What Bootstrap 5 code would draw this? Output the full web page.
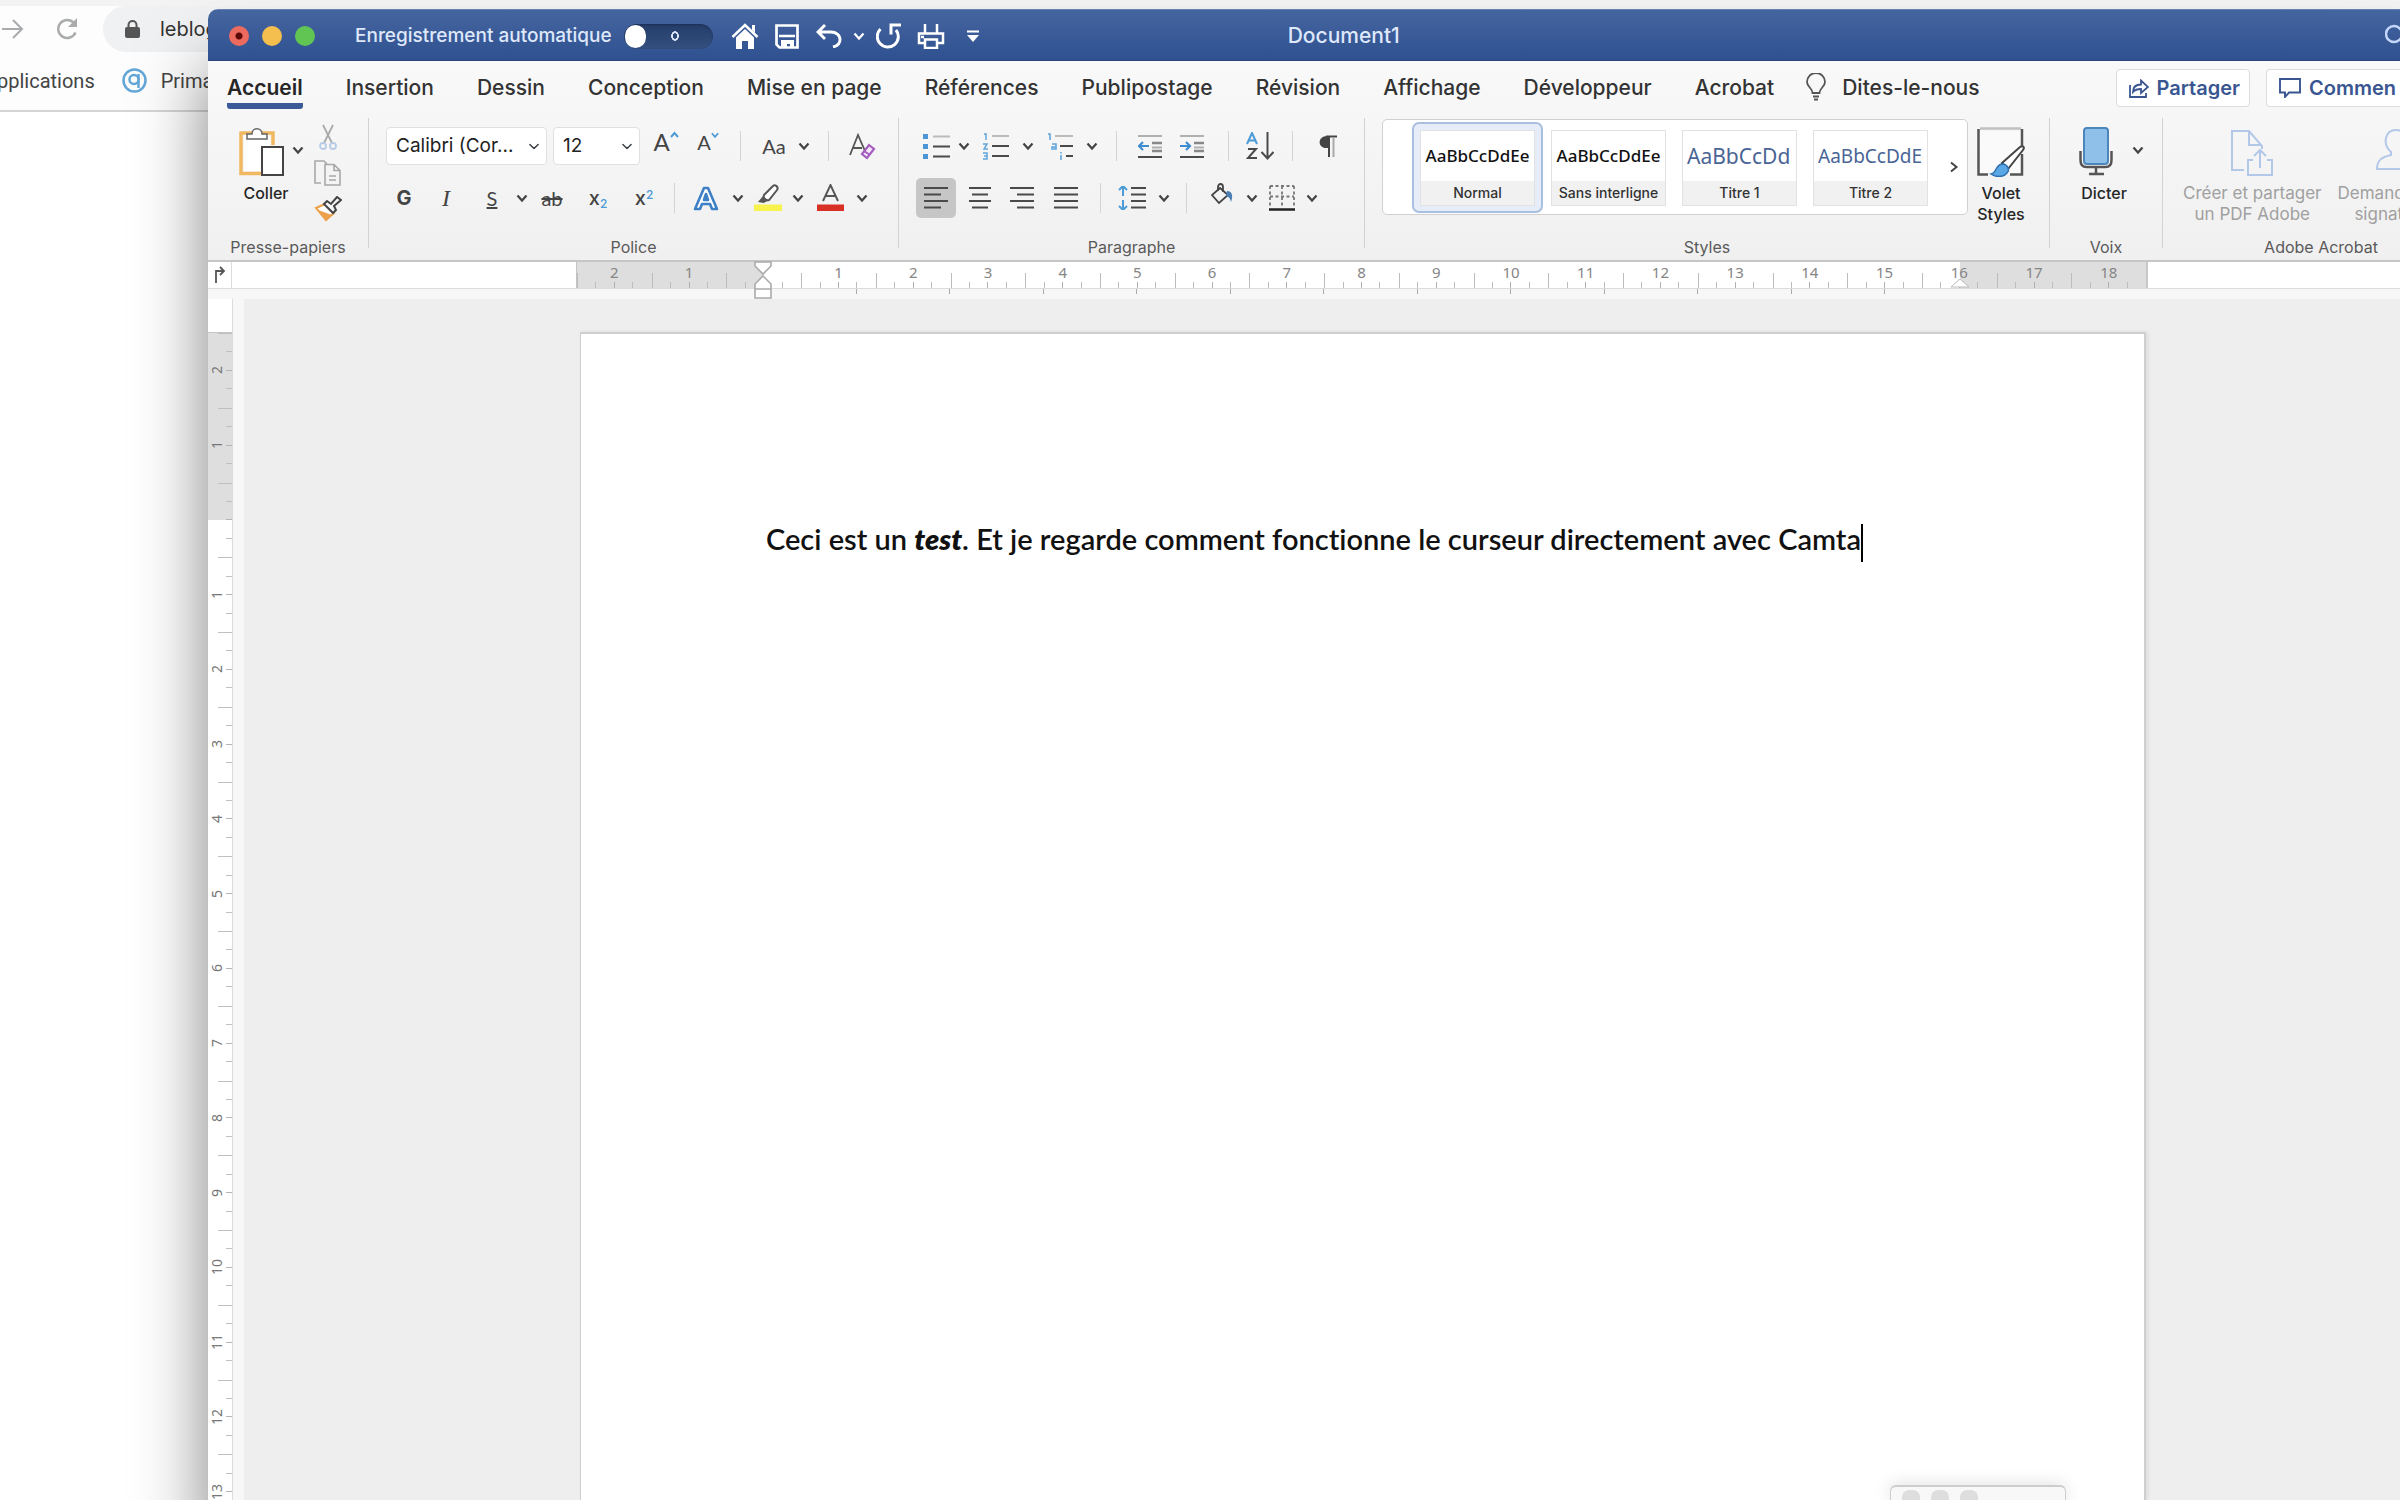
<!DOCTYPE html>
<html lang="fr">
<head>
<meta charset="utf-8">
<meta name="viewport" content="width=device-width, initial-scale=1">
<title>Document1</title>
<link href="https://cdn.jsdelivr.net/npm/bootstrap@5.3.0/dist/css/bootstrap.min.css" rel="stylesheet">
<script src="https://cdn.jsdelivr.net/npm/bootstrap@5.3.0/dist/js/bootstrap.bundle.min.js"></script>
<style>
  body { font-family: Inter, "Liberation Sans", sans-serif; color: #2b2b2b; background: #fff; height: 100vh; overflow: hidden; }
  svg { display: block; flex: none; fill: none; stroke-linecap: butt; }
  button { font-family: inherit; }

  /* browser behind */
  .web { height: 112px; background: #fdfdfd; border-bottom: 2px solid #d4d5d6; z-index: -1; border-top: 6px solid #f3f3f3; }
  .reload { margin: 0 7px 0 31px; }
  .omni { height: 46px; border-radius: 23px 0 0 23px; background: #f0f1f2; margin-left: 17px; padding-left: 22px; font-size: 20px; color: #333; }
  .bookmark { font-family: Roboto, sans-serif; font-size: 20px; line-height: 24px; color: #444; text-decoration: none; }
  .marks { margin-top: 16px; margin-left: -3px; }
  .site { margin: 0 14px 0 27px; }

  /* editor window */
  .win { top: 9px; left: 208px; right: 0; bottom: 0; border-radius: 10px 0 0 0; background: #eee; box-shadow: 0 60px 70px rgba(0,0,0,.5); }
  .clip { border-radius: 10px 0 0 0; }
  .titlebar { height: 52px; background: linear-gradient(#45659f, #2f5190); border-top: 1px solid #6680b3; border-bottom: 1px solid #27457f; color: #dfe8fb; padding: 2px 0 0 21px; }
  .light { width: 20px; height: 20px; border-radius: 50%; margin-right: 13px; }
  .l-close { background: radial-gradient(circle, #5c0a06 0 3px, #ec6a5e 4px); }
  .l-min { background: #f5bf4f; } .l-max { background: #61c554; }
  .auto-lb { font-size: 19px; font-weight: 500; margin-left: 27px; line-height: 24px; white-space: nowrap; }
  .auto-sw { appearance: none; width: 89px; height: 25px; border-radius: 13px; margin: 0 16px 0 12px;
    background: radial-gradient(ellipse 4px 5px at 51px 12px, transparent 50%, #dfe8fb 60% 90%, transparent) , linear-gradient(#253c68, #34507f); box-shadow: inset 0 1px 2px #1c3058; }
  .auto-sw::before { content: ""; display: block; width: 21px; height: 23px; border-radius: 12px; background: #fff; margin: 1px; }
  .qa { background: none; border: 0; padding: 0; height: 32px; display: flex; align-items: center; justify-content: center; color: #fff; }
  .doc-name { font-size: 21px; line-height: 26px; font-weight: 500; margin-left: 299px; }

  .ribbon { background: linear-gradient(#f9f9f9, #f0f0f0); border-bottom: 2px solid #c6c6c6; height: 201px; }
  .tabs { height: 50px; padding-left: 19px; }
  .tabs a { font-size: 21px; line-height: 30px; font-weight: 500; color: #333; text-decoration: none; margin-right: 43px; padding-top: 12px; height: 48px; white-space: nowrap; }
  .tabs a.on { font-weight: 600; color: #262626; border-bottom: 6px solid #3a5a98; border-radius: 3px; }
  .act { height: 38px; background: #fff; border: 1px solid #dcdcdc; border-radius: 4px; color: #3a5691; font-weight: 600; font-size: 20px; line-height: 24px; padding: 0 9px 0 12px; gap: 8px; white-space: nowrap; }
  .grp { height: 149px; padding-top: 16px; flex: none; }
  .bar { width: 1px; height: 130px; margin-top: 7px; background: #d2d2d2; flex: none; }
  .cap { font-size: 16px; line-height: 24px; color: #5a5a5a; text-align: center; margin-top: 17px; }
  .r1 { height: 38px; } .r2 { height: 40px; margin-top: 13px; }
  .tb { height: 38px; border: 0; background: none; padding: 0; display: flex; align-items: center; justify-content: center; color: #444; flex: none; font-size: 24px; line-height: 30px; }
  .tb.on { background: #c6c6c6; border-radius: 5px; height: 40px; }
  .sp { height: 30px; display: flex; justify-content: center; flex: none; }
  .sp::after { content: ""; width: 1px; background: #d4d4d4; }
  .s16 { width: 16px; } .s24 { width: 24px; } .s28 { width: 28px; } .s32 { width: 32px; } .s36 { width: 36px; }
  .s40 { width: 40px; } .s44 { width: 44px; } .s48 { width: 48px; } .s52 { width: 52px; }
  .fs-box.form-select { height: 38px; border: 1px solid #e0e0e0; border-radius: 4px; padding: 0 26px 0 9px; font-size: 19px; line-height: 24px; color: #222; background-size: 12px 11px; background-position: right 6px center; background-color: #fff; }
  .sel-a { width: 161px; } .sel-b { width: 87px; margin-left: 6px; }
  .lite { font-family: Lato, sans-serif; font-weight: 400; }
  .big { border: 0; background: none; padding: 0; font-size: 16px; line-height: 21px; color: #262626; font-weight: 500; display: flex; flex-direction: column; align-items: center; gap: 6px; white-space: nowrap; }
  .big.off { color: #a0a0a0; font-weight: 400; font-size: 17px; }
  .gallery { height: 96px; width: 586px; background: #fff; border: 1px solid #d0d0d0; border-radius: 5px; margin-top: -8px; padding-left: 29px; }
  .tile { width: 131px; height: 91px; border: 2px solid transparent; border-radius: 7px; background: none; padding: 6px; }
  .tile.on { border-color: #a9bfdf; background: #e6ecf8; }
  .tile > span { display: flex; flex-direction: column; height: 76px; width: 115px; border: 1px solid #e2e2e2; background: #fff; overflow: hidden; }
  .tile b { font: 500 17px/50px "Noto Sans", sans-serif; height: 50px; overflow: hidden; color: #111; white-space: nowrap; margin: 0 4px; }
  .tile b.h1s { font-size: 21px; font-weight: 400; color: #4a6595; text-align: left; }
  .tile b.h2s { font-size: 19px; font-weight: 400; color: #4a6595; text-align: left; }
  .tile i { font: 500 14px/24px Inter, sans-serif; background: #f1f1f1; color: #333; flex: 1; white-space: nowrap; }
  .g1 { width: 160px; } .g1 .big { margin-left: 30px; width: 56px; } .chev1 { margin: 4px 0 0 -4px; }
  .side { margin-left: 8px; height: 93px; margin-top: -8px; } .side .tb { height: 36px; width: 28px; }
  .g2 { width: 529px; padding-left: 17px; } .g3 { width: 465px; padding-left: 17px; }
  .g4 { width: 684px; padding-left: 17px; } .g5 { width: 112px; } .g6 { width: 316px; }
  .pane-row { height: 91px; }
  .g2 .cap, .g3 .cap, .g4 .cap { margin-left: -17px; }
  .pane { width: 66px; } .mic { padding-left: 28px; } .mic .big { width: 52px; } .adobe { padding-left: 20px; }
  .gras { font-size: 20px; } .ital { font-family: "Liberation Serif", serif; font-style: italic; }
  .idx { font-size: 20px; font-weight: 500; } .idx sub, .idx sup { font-size: 12px; color: #4c9bd6; }

  /* rulers */
  .hr-row { height: 27px; background: #fff; border-bottom: 1px solid #dcdcdc; }
  .corner { width: 24px; border-right: 1px solid #dcdcdc; }
  .hr-lead { width: 344px; }
  .hruler { width: 1572px; background: linear-gradient(90deg, #dedede 187px, transparent 187px 1383px, #dedede 1383px); border-left: 1px solid #c4c4c4; border-right: 2px solid #c8c8c8; }
  .hcell { flex: 1 1 0; font: 15px/20px "Noto Sans", sans-serif; color: #858585; text-align: center;
    background: linear-gradient(#bcbcbc,#bcbcbc) 0 100%/1px 15px no-repeat, linear-gradient(#bcbcbc,#bcbcbc) 25% 100%/1px 6px no-repeat, linear-gradient(#b0b0b0,#b0b0b0) 50% 100%/1px 6px no-repeat, linear-gradient(#bcbcbc,#bcbcbc) 75% 100%/1px 6px no-repeat; }
  .stops { height: 10px; background: #f7f7f7; padding-left: 555px; }
  .stops > div { width: 1122px; height: 5px; }
  .stops span { flex: 1 1 0; border-right: 1px solid #aaa; }
  .mark-l { left: 545px; top: 252px; } .mark-r { left: 1742px; top: 270px; }
  .vr-col { width: 25px; background: #fff; border-right: 1px solid #dcdcdc; padding-top: 43px; margin-top: -10px; }
  .vruler { height: 1197px; background: linear-gradient(#dedede 187px, #fff 187px); border-top: 1px solid #c4c4c4; }
  .vcell { flex: 1 1 0; display: flex; align-items: center; padding-left: 1px;
    background: linear-gradient(#c0c0c0,#c0c0c0) 100% 0/14px 1px no-repeat, linear-gradient(#c0c0c0,#c0c0c0) 100% 25%/6px 1px no-repeat, linear-gradient(#b4b4b4,#b4b4b4) 100% 50%/6px 1px no-repeat, linear-gradient(#c0c0c0,#c0c0c0) 100% 75%/6px 1px no-repeat; }
  .vcell span { writing-mode: vertical-rl; transform: rotate(180deg); font: 14px/16px "Noto Sans", sans-serif; color: #777; }
  .gutter { width: 11px; background: #f7f7f7; }
  .sheet { width: 1566px; margin: 33px 0 0 336px; background: #fff; border: solid #cfcfcf; border-width: 2px 2px 0 1px; padding: 185px 0 0 185px; box-shadow: 2px 0 4px rgba(0,0,0,.08); }
  .sheet p { font-family: Lato, "Noto Sans", sans-serif; font-weight: 600; font-size: 29px; line-height: 40px; color: #111; white-space: nowrap; font-variant-ligatures: none; }
  .sheet strong { font-weight: 800; }
  .caret { display: inline-block; width: 2px; height: 38px; background: #000; vertical-align: middle; }
  .float-bar { left: 1682px; bottom: 0; width: 176px; height: 15px; background: #f8f8f8; border: 1px solid #cdcdcd; border-top-width: 2px; border-bottom: 0; border-radius: 6px 6px 0 0; padding: 3px 0 0 11px; gap: 11px; box-shadow: 0 0 18px rgba(0,0,0,.14); }
  .float-bar span { width: 18px; height: 18px; flex: none; border-radius: 7px; background: #dedede; }
</style>
</head>
<body class="position-relative">

<svg width="0" height="0" class="position-absolute" aria-hidden="true">
  <symbol id="chev" viewBox="0 0 12 12"><path d="M1.500 3.500 6 8.500l4.500-5" stroke="currentColor" stroke-width="2.200"/></symbol>
  <symbol id="lines-l" viewBox="0 0 24 24"><path d="M0 2h24M0 8.500h17M0 15h24M0 21.500h17" stroke="#4a4a4a" stroke-width="2"/></symbol>
  <symbol id="lines-c" viewBox="0 0 24 24"><path d="M1 2h22M4 8.500h16M1 15h22M4 21.500h16" stroke="#4a4a4a" stroke-width="2"/></symbol>
  <symbol id="lines-r" viewBox="0 0 24 24"><path d="M0 2h24M7 8.500h17M0 15h24M7 21.500h17" stroke="#4a4a4a" stroke-width="2"/></symbol>
  <symbol id="lines-j" viewBox="0 0 24 24"><path d="M0 2h24M0 8.500h24M0 15h24M0 21.500h24" stroke="#4a4a4a" stroke-width="2"/></symbol>
</svg>

<header class="web position-absolute top-0 start-0 w-100 d-flex flex-column">
  <div class="d-flex align-items-center">
    <svg width="24" height="22" viewBox="0 0 24 22" stroke="#a9abad" stroke-width="2"><path d="M2 11h20M13 2l9 9-9 9"/></svg>
    <svg class="reload" width="24" height="22" viewBox="0 0 24 22" stroke="#a9abad" stroke-width="2.500"><path d="M20.500 14.500A9 9 0 1 1 19 5"/><path d="M22 0v9h-9z" fill="#a9abad" stroke="none"/></svg>
    <div class="omni d-flex align-items-center flex-fill">
      <svg class="me-3" width="15" height="18" viewBox="0 0 15 18"><path d="M3.500 8V5a4 4 0 0 1 8 0v3" stroke="#555" stroke-width="2"/><rect y="7" width="15" height="11" rx="2" fill="#555"/></svg>
      <span class="ms-1">leblogducurseur</span>
    </div>
  </div>
  <nav class="marks d-flex align-items-center">
    <a class="bookmark" href="#">pplications</a>
    <svg class="site" width="25" height="25" viewBox="0 0 25 25" stroke="#62a7d8"><circle cx="12.500" cy="12.500" r="11" stroke-width="2.500"/><circle cx="12" cy="11.500" r="4.500" stroke-width="2.500"/><path d="M16.500 6v14" stroke-width="2.500"/></svg>
    <a class="bookmark" href="#">Primaire</a>
  </nav>
</header>

<main class="win position-absolute">
 <div class="clip d-flex flex-column h-100 overflow-hidden position-relative">

  <div class="titlebar d-flex align-items-center flex-shrink-0">
    <span class="light l-close"></span><span class="light l-min"></span><span class="light l-max"></span>
    <label class="auto-lb" for="auto">Enregistrement automatique</label>
    <input class="auto-sw flex-shrink-0" id="auto" type="checkbox" role="switch">
    <button class="qa s32" aria-label="Accueil"><svg width="28" height="26" viewBox="0 0 28 26"><path d="M1.500 14 14 2l12.500 12" stroke="#fff" stroke-width="2.500"/><path d="M21 2h3v8l-3-3zM5 14.500l9-8.500 9 8.500V26h-6v-8h-6v8H5z" fill="#fff"/></svg></button>
    <button class="qa s52" aria-label="Enregistrer"><svg width="24" height="25" viewBox="0 0 24 25"><path d="M1.500 1.500h21v22h-18l-3-3z" stroke="#fff" stroke-width="2.700"/><path d="M4 12h16" stroke="#fff" stroke-width="2.500"/><path d="M6 16h13v8h-4v-4h-3v4H6z" fill="#fff"/></svg></button>
    <button class="qa s32" aria-label="Annuler"><svg width="26" height="24" viewBox="0 0 26 24"><path d="M9 1 2 8l7 7M2.500 8H15c5 0 9 3 9 7.500S21 22 17 23" stroke="#fff" stroke-width="2.900"/></svg></button>
    <button class="qa s28" aria-label="Options d’annulation"><svg width="12" height="12"><use href="#chev"/></svg></button>
    <button class="qa s32" aria-label="Rétablir"><svg width="26" height="26" viewBox="0 0 26 26"><path d="M4.500 6A10.500 10.500 0 1 0 20 7" stroke="#fff" stroke-width="3"/><path d="M25 2H15v9.500" stroke="#fff" stroke-width="3"/></svg></button>
    <button class="qa s52" aria-label="Imprimer"><svg width="28" height="26" viewBox="0 0 28 26" stroke="#fff" stroke-width="2.500"><path d="M8 10V1M20 10V1M7 20H2v-9.500h24V20h-5M8 16.500h12V25H8zM4 14h3"/></svg></button>
    <button class="qa s32" aria-label="Personnaliser"><svg width="12" height="12" viewBox="0 0 12 12"><path d="M0 1.500h12" stroke="#fff" stroke-width="2"/><path d="M0 5h12l-6 7z" fill="#fff"/></svg></button>
    <span class="doc-name">Document1</span>
    <button class="qa ms-auto" aria-label="Rechercher"><svg width="15" height="24" viewBox="0 0 15 24"><circle cx="9" cy="10" r="8" stroke="#c3d6f8" stroke-width="2.500"/></svg></button>
  </div>

  <div class="ribbon flex-shrink-0">
    <div class="tabs d-flex">
      <a class="on" href="#">Accueil</a><a href="#">Insertion</a><a href="#">Dessin</a><a href="#">Conception</a><a href="#">Mise en page</a><a href="#">Références</a><a href="#">Publipostage</a><a href="#">Révision</a><a href="#">Affichage</a><a href="#">Développeur</a><a href="#" class="me-4">Acrobat</a>
      <a href="#" class="d-flex ms-2"><svg class="me-3" width="20" height="28" viewBox="0 0 20 28" stroke="#555" stroke-width="1.800"><path d="M6.500 20c0-5-5.500-6-5.500-11a9 9 0 0 1 18 0c0 5-5.500 6-5.500 11zM7 23.500h6M8 26.500h4"/></svg>Dites-le-nous</a>
      <div class="d-flex ms-auto pt-2 gap-3 flex-shrink-0">
        <button class="act d-flex align-items-center"><svg width="20" height="19" viewBox="0 0 20 19" stroke="#3a5691" stroke-width="1.800"><path d="M1 6v12h16v-4M4 13c0-5 3-7.500 8-7.500V1.500L19 8l-7 6v-4c-4 0-6 .5-8 3z"/></svg>Partager</button>
        <button class="act d-flex align-items-center border-end-0 rounded-end-0 pe-1"><svg width="22" height="20" viewBox="0 0 22 20" stroke="#3a5691" stroke-width="1.900"><path d="M1 1h20v13.500H10L6 19v-4.500H1z"/></svg>Commen</button>
      </div>
    </div>

    <div class="d-flex overflow-hidden">
      <section class="grp g1">
        <div class="pane-row d-flex align-items-start">
          <button class="big"><svg class="me-2" width="46" height="50" viewBox="0 0 46 50"><path d="M2 6h32v12M2 4.500v42h20" stroke="#f0b860" stroke-width="3.500"/><path d="M5 8h26v12H22v24H5z" fill="#fff"/><path d="M8 12V7h5c0-7 10-7 10 0h5v5z" fill="#fff" stroke="#666" stroke-width="1.500"/><rect x="23" y="20" width="21" height="28" fill="#fff" stroke="#444" stroke-width="2"/></svg>Coller</button>
          <button class="tb s16 chev1" aria-label="Options de collage"><svg width="12" height="12"><use href="#chev"/></svg></button>
          <div class="d-flex flex-column side">
            <button class="tb" aria-label="Couper"><svg width="18" height="26" viewBox="0 0 18 26"><path d="M4 1l9 18M14 1 5 19" stroke="#aaa" stroke-width="1.800"/><circle cx="4" cy="22" r="3" stroke="#b9cce6" stroke-width="1.800"/><circle cx="14" cy="22" r="3" stroke="#b9cce6" stroke-width="1.800"/></svg></button>
            <button class="tb" aria-label="Copier"><svg width="28" height="26" viewBox="0 0 28 26" stroke="#a8a8a8" stroke-width="1.600"><path d="M7 23H1V1h9l3 3M11 4.500h9l6 6V25H11zM20 4.500v6h6M15 16h7M15 20h7"/></svg></button>
            <button class="tb" aria-label="Reproduire la mise en forme"><svg width="28" height="26" viewBox="0 0 28 26"><path d="M2 12 11 8l9 9-8 7z" fill="#fff" stroke="#eda04c" stroke-width="2"/><path d="M4 14l14 5-6 6z" fill="#eda04c"/><path d="M10 8l3-3 4 3 6-7 4 3-7 6 2 4-3 3z" fill="#f6f6f6" stroke="#444" stroke-width="2"/></svg></button>
          </div>
        </div>
        <div class="cap">Presse-papiers</div>
      </section>
      <div class="bar"></div>

      <section class="grp g2">
        <div class="r1 d-flex align-items-center">
          <select class="form-select fs-box sel-a" aria-label="Police"><option>Calibri (Cor...</option></select>
          <select class="form-select fs-box sel-b" aria-label="Taille"><option>12</option></select>
          <button class="tb s44 lite ms-1 align-items-start">A<svg class="mt-1" width="9" height="8" viewBox="0 0 9 8"><path d="M1 6l3.500-4L8 6" stroke="#4c9bd6" stroke-width="2"/></svg></button>
          <button class="tb s40 lite align-items-start fs-5">A<svg class="mt-1" width="8" height="8" viewBox="0 0 9 8"><path d="M1 2l3.500 4L8 2" stroke="#4c9bd6" stroke-width="2"/></svg></button>
          <span class="sp s24"></span>
          <button class="tb s44 lite fs-5">Aa</button><button class="tb s16" aria-label="Casse"><svg width="12" height="12"><use href="#chev"/></svg></button>
          <span class="sp s32"></span>
          <button class="tb s36" aria-label="Effacer la mise en forme"><svg width="27" height="27" viewBox="0 0 27 27"><path d="M1 22 9 2l7 16M4 15h9" stroke="#555" stroke-width="1.800"/><path d="M20 12l5 4-7 9-5-4z" stroke="#a35cc0" stroke-width="2.200" fill="#f6eafa"/><path d="M15 18l6 4" stroke="#a35cc0" stroke-width="2"/></svg></button>
        </div>
        <div class="r2 d-flex align-items-center">
          <button class="tb s36 fw-bold gras">G</button>
          <button class="tb s48 ital">I</button>
          <button class="tb s44 lite text-decoration-underline fs-5">S</button><button class="tb s16" aria-label="Soulignement"><svg width="12" height="12"><use href="#chev"/></svg></button>
          <button class="tb s44 lite text-decoration-line-through fs-5">ab</button>
          <button class="tb s48 idx"><span>x<sub>2</sub></span></button>
          <button class="tb s44 idx"><span>x<sup>2</sup></span></button>
          <span class="sp s16"></span>
          <button class="tb s48" aria-label="Effets de texte"><svg width="26" height="25" viewBox="0 0 26 25"><path d="M2 23 11 2h4l9 21h-5l-2-5H9l-2 5zM11 14h4l-2-6z" fill="#fff" stroke="#3d80c6" stroke-width="2.600" stroke-linejoin="round"/></svg></button><button class="tb s16" aria-label="Options d’effets"><svg width="12" height="12"><use href="#chev"/></svg></button>
          <button class="tb s44" aria-label="Surlignage"><svg width="28" height="28" viewBox="0 0 28 28"><path d="M10 11 19 2c2-2 6 1 4 4l-8 10-6 1z" fill="#fff" stroke="#555" stroke-width="2"/><path d="M4 18l5-6 5 4-4 3z" fill="#555"/><path d="M0 20.500h28v6.500H0z" fill="#f8f24e"/></svg></button><button class="tb s16" aria-label="Couleurs de surlignage"><svg width="12" height="12"><use href="#chev"/></svg></button>
          <button class="tb s48" aria-label="Couleur de police"><svg width="27" height="28" viewBox="0 0 27 28"><path d="M6 17 13.500 1 21 17M9 12h9" stroke="#555" stroke-width="1.900"/><path d="M0 20.500h27v6.500H0z" fill="#d93025"/></svg></button><button class="tb s16" aria-label="Couleurs de police"><svg width="12" height="12"><use href="#chev"/></svg></button>
        </div>
        <div class="cap">Police</div>
      </section>
      <div class="bar"></div>

      <section class="grp g3">
        <div class="r1 d-flex align-items-center">
          <button class="tb s40" aria-label="Puces"><svg width="27" height="26" viewBox="0 0 27 26"><path d="M0 1h5v5H0zM0 11h5v5H0zM0 21h5v5H0z" fill="#4c96d6"/><path d="M10 3.500h17" stroke="#bbb" stroke-width="2"/><path d="M10 13.500h17M10 23.500h17" stroke="#4a4a4a" stroke-width="2"/></svg></button><button class="tb s16" aria-label="Types de puces"><svg width="12" height="12"><use href="#chev"/></svg></button>
          <button class="tb s48" aria-label="Numérotation"><svg width="26" height="28" viewBox="0 0 26 28"><path d="M1 2h2v6M0 12h4l-3 5h4M0 21h4v6H0M1 24h3" stroke="#62a5dc" stroke-width="1.500"/><path d="M9 4h17" stroke="#bbb" stroke-width="2"/><path d="M9 14h17M9 24h17" stroke="#4a4a4a" stroke-width="2"/></svg></button><button class="tb s16" aria-label="Types de numéros"><svg width="12" height="12"><use href="#chev"/></svg></button>
          <button class="tb s48" aria-label="Liste à plusieurs niveaux"><svg width="26" height="28" viewBox="0 0 26 28"><path d="M1 2h2v6M5 12h4v5H5v-2h4M14 20v1.500M14 23v5" stroke="#62a5dc" stroke-width="1.600"/><path d="M8 4h18" stroke="#bbb" stroke-width="2"/><path d="M13 14h13M19 24h7" stroke="#4a4a4a" stroke-width="2"/></svg></button><button class="tb s16" aria-label="Types de listes"><svg width="12" height="12"><use href="#chev"/></svg></button>
          <span class="sp s32"></span>
          <button class="tb s36" aria-label="Diminuer le retrait"><svg width="24" height="26" viewBox="0 0 24 26"><path d="M0 3h24M14 14.500h10" stroke="#b0b0b0" stroke-width="2"/><path d="M0 24h24" stroke="#4a4a4a" stroke-width="2"/><path d="M14 10h10M14 18h10" stroke="#888" stroke-width="2.500"/><path d="M11 13H1M5 9l-4 4 4 4" stroke="#3f8cd0" stroke-width="2.200"/></svg></button>
          <button class="tb s48" aria-label="Augmenter le retrait"><svg width="24" height="26" viewBox="0 0 24 26"><path d="M0 3h24M14 14.500h10" stroke="#b0b0b0" stroke-width="2"/><path d="M0 24h24" stroke="#4a4a4a" stroke-width="2"/><path d="M14 10h10M14 18h10" stroke="#888" stroke-width="2.500"/><path d="M0 13h9M6 9l4 4-4 4" stroke="#3f8cd0" stroke-width="2.200"/></svg></button>
          <span class="sp s24"></span>
          <button class="tb s40" aria-label="Trier"><svg width="28" height="28" viewBox="0 0 28 28"><path d="M1 12 6 1l5 11M3 8.500h6" stroke="#4c9bd6" stroke-width="2"/><path d="M2 17h8L2 26h9" stroke="#4a4a4a" stroke-width="2"/><path d="M21.500 0v26M15.500 20l6 6.500 6-6.500" stroke="#4a4a4a" stroke-width="2"/></svg></button>
          <span class="sp s24"></span>
          <button class="tb s48" aria-label="Marques de paragraphe"><svg width="18" height="22" viewBox="0 0 18 22"><path d="M9 1v12C-2 14-2 1 8 1z" fill="#444"/><path d="M7 1.500h11M10 1v21" stroke="#444" stroke-width="2"/><path d="M14.500 2v20" stroke="#aaa" stroke-width="2"/></svg></button>
        </div>
        <div class="r2 d-flex align-items-center">
          <button class="tb s40 on" aria-label="Aligner à gauche"><svg width="24" height="24"><use href="#lines-l"/></svg></button>
          <button class="tb s48" aria-label="Centrer"><svg width="24" height="24"><use href="#lines-c"/></svg></button>
          <button class="tb s36" aria-label="Aligner à droite"><svg width="24" height="24"><use href="#lines-r"/></svg></button>
          <button class="tb s52" aria-label="Justifier"><svg width="24" height="24"><use href="#lines-j"/></svg></button>
          <span class="sp s16"></span>
          <button class="tb s48" aria-label="Interligne"><svg width="28" height="24" viewBox="0 0 28 24"><path d="M5 0v10M1 4l4-4 4 4M5 24V14M1 20l4 4 4-4" stroke="#4c9bd6" stroke-width="2"/><path d="M13 2h15M13 8.500h15M13 15h15M13 21.500h15" stroke="#4a4a4a" stroke-width="2"/></svg></button><button class="tb s16" aria-label="Options d’interligne"><svg width="12" height="12"><use href="#chev"/></svg></button>
          <span class="sp s28"></span>
          <button class="tb s44" aria-label="Trame de fond"><svg class="mb-2" width="22" height="22" viewBox="0 0 22 22"><path d="M9 5l8 7-9 8-7-8zM7 8V4c0-4 5-4 5 0v5" stroke="#444" stroke-width="1.800"/><path d="M16 8c6 0 6 6 4 11-1-4-2-5-5-6z" fill="#4c7fb5"/></svg></button><button class="tb s16" aria-label="Couleurs de trame"><svg width="12" height="12"><use href="#chev"/></svg></button>
          <button class="tb s44" aria-label="Bordures"><svg width="26" height="26" viewBox="0 0 26 26"><path d="M1 1h24M1 11.500h24" stroke="#777" stroke-width="1.800" stroke-dasharray="3 2.500"/><path d="M1 1v20M13 1v20M25 1v20" stroke="#777" stroke-width="1.800" stroke-dasharray="3 2.500"/><path d="M0 24.500h26" stroke="#222" stroke-width="2.500"/></svg></button><button class="tb s16" aria-label="Types de bordures"><svg width="12" height="12"><use href="#chev"/></svg></button>
        </div>
        <div class="cap">Paragraphe</div>
      </section>
      <div class="bar"></div>

      <section class="grp g4">
        <div class="pane-row d-flex align-items-start">
          <div class="gallery d-flex align-items-center flex-shrink-0">
            <button class="tile on"><span><b>AaBbCcDdEe</b><i>Normal</i></span></button>
            <button class="tile"><span><b>AaBbCcDdEe</b><i>Sans interligne</i></span></button>
            <button class="tile"><span><b class="h1s">AaBbCcDdEe</b><i>Titre 1</i></span></button>
            <button class="tile"><span><b class="h2s">AaBbCcDdEe</b><i>Titre 2</i></span></button>
            <button class="tb s28 ms-1" aria-label="Autres styles"><svg width="10" height="12" viewBox="0 0 10 12"><path d="M2 1.500 7.500 6 2 10.500" stroke="#444" stroke-width="2"/></svg></button>
          </div>
          <button class="big pane"><svg width="50" height="50" viewBox="0 0 50 50"><path d="M4 1.500h41" stroke="#c0c0c0" stroke-width="2.500"/><path d="M3 4h42v43H3z" fill="#fafafa"/><path d="M12 47.500H2.500V2M46 2v16M46 27v20.500H34" stroke="#555" stroke-width="2.500"/><path d="M26 36 44 20c3-2 5 0 3 3L32 42z" fill="#fff" stroke="#444" stroke-width="2"/><path d="M15 47c6-1 4-9 11-10 6 0 8 6 5 9-4 5-12 4-16 1z" fill="#5aa7e6" stroke="#2f6fae" stroke-width="1.500"/></svg><span>Volet<br>Styles</span></button>
        </div>
        <div class="cap">Styles</div>
      </section>
      <div class="bar"></div>

      <section class="grp g5">
        <div class="pane-row d-flex align-items-start mic">
          <button class="big"><svg class="me-3" width="34" height="50" viewBox="0 0 34 50"><path d="M1.500 24v9c0 5 2 7 6 7h19c4 0 6-2 6-7v-9" stroke="#555" stroke-width="2.500"/><path d="M17 40v7M10 47h15" stroke="#555" stroke-width="2.500"/><rect x="5" y="1" width="24" height="36" rx="3" fill="#8fc0ea" stroke="#4d86bb" stroke-width="2"/></svg>Dicter</button>
          <button class="tb s16 mt-1" aria-label="Options de dictée"><svg width="12" height="12"><use href="#chev"/></svg></button>
        </div>
        <div class="cap">Voix</div>
      </section>
      <div class="bar"></div>

      <section class="grp g6">
        <div class="pane-row d-flex align-items-start gap-3 adobe">
          <button class="big off"><svg width="44" height="50" viewBox="0 0 44 50" stroke="#b3c8e8" stroke-width="2"><path d="M14 43H2V4h17l13 15v3M19 4v14h13M23 33h-5v15h24V33h-5M30 41V24M24 29l6-6 6 6"/></svg><span>Créer et partager<br>un PDF Adobe</span></button>
          <button class="big off"><svg width="44" height="50" viewBox="0 0 44 50" stroke="#b3c8e8" stroke-width="2"><path d="M26 42H3c0-9 5-12 14-14v-3c-9-8-6-22 5-22s14 14 5 22v3c8 2 12 5 14 9M27 35l6 5-6 5"/></svg><span>Demander des<br>signatures</span></button>
        </div>
        <div class="cap">Adobe Acrobat</div>
      </section>
    </div>
  </div>

  <div class="hr-row d-flex flex-shrink-0">
    <div class="corner d-flex justify-content-center pt-1 flex-shrink-0"><svg width="12" height="18" viewBox="0 0 12 18"><path d="M2 17V5h8M6 1l4 4-4 4" stroke="#555" stroke-width="1.800"/></svg></div>
    <div class="hr-lead flex-shrink-0"></div>
    <div class="hruler d-flex flex-shrink-0" id="hruler"></div>
  </div>
  <div class="stops flex-shrink-0"><div class="d-flex" id="stops"></div></div>
  <svg class="mark-l position-absolute" width="20" height="38" viewBox="0 0 20 38" stroke="#aaa" stroke-width="1.600"><path fill="#fff" d="M2 1h16v4l-8 8-8-8zM10 15l8 8v5H2v-5zM2 28h16v9H2z"/></svg>
  <svg class="mark-r position-absolute" width="20" height="9" viewBox="0 0 20 9"><path d="M10 0l9 8H1z" fill="#fff" stroke="#bbb"/></svg>

  <div class="d-flex flex-fill overflow-hidden">
    <div class="vr-col flex-shrink-0"><div class="vruler d-flex flex-column" id="vruler"></div></div>
    <div class="gutter flex-shrink-0"></div>
    <article class="sheet flex-shrink-0"><p class="m-0">Ceci est un <strong><em>test</em></strong>. Et je regarde comment fonctionne le curseur directement avec Camta<span class="caret"></span></p></article>
  </div>

  <div class="float-bar position-absolute d-flex overflow-hidden"><span></span><span></span><span></span></div>
 </div>
</main>

<script>
  const fill = (id, n, html) => document.getElementById(id).innerHTML = Array.from({ length: n }, (_, i) => html(i - 2)).join('');
  fill('hruler', 21, v => `<span class="hcell">${v ? Math.abs(v) : ''}</span>`);
  fill('vruler', 16, v => `<div class="vcell"><span>${v ? Math.abs(v) : ''}</span></div>`);
  fill('stops', 12, () => '<span></span>');
</script>
</body>
</html>
